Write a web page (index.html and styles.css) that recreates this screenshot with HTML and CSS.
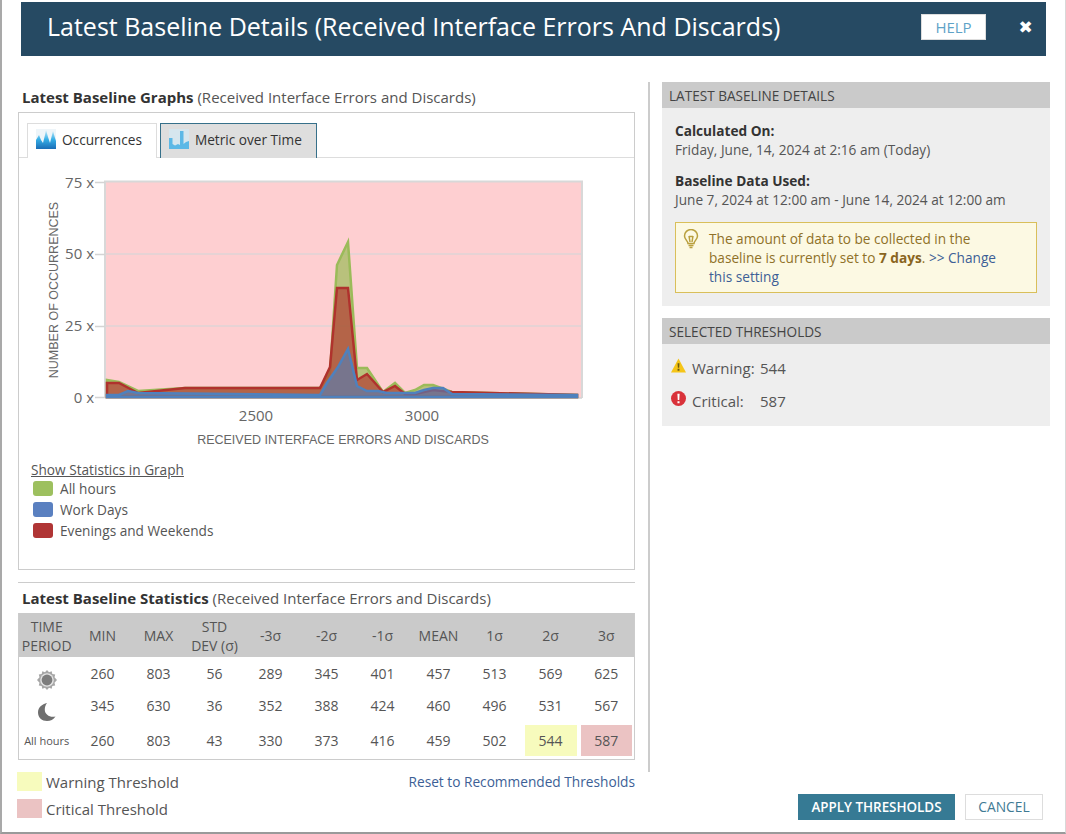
FILE: index.html
```html
<!DOCTYPE html>
<html lang="en">
<head>
<meta charset="utf-8">
<title>Latest Baseline Details</title>
<link rel="stylesheet" href="styles.css">
</head>
<body>
<div class="dialog">
  <header class="titlebar">
    <h1 class="title">Latest Baseline Details (Received Interface Errors And Discards)</h1>
    <button class="help">HELP</button>
    <span class="close">&#10006;</span>
  </header>
  <div class="content">
    <div class="left">
      <h2 class="section-title"><b>Latest Baseline Graphs</b> (Received Interface Errors and Discards)</h2>
      <div class="graph-box">
        <div class="tabs">
          <div class="tab">
            <svg class="tab-icon" viewBox="0 0 20 20"><defs><linearGradient id="g1" x1="0" y1="0" x2="0" y2="1"><stop offset="0" stop-color="#c8ecfa"/><stop offset=".5" stop-color="#35aee6"/><stop offset="1" stop-color="#1a6db6"/></linearGradient></defs><rect width="20" height="20" fill="#eef5f9"/><path d="M0 20V11L3 6 5 11 7 14 9 6 10 1 12 8 14 14 16 6 17 2 19 9 20 12V20Z" fill="url(#g1)"/></svg>
            Occurrences
          </div>
          <div class="tab tab-active">
            <svg class="tab-icon" viewBox="0 0 20 20"><rect width="20" height="20" fill="#d6e6ee"/><path d="M0 20V9H3.500V15L6 16.500 9 15 11 16V2H14.500V15L17 13 20 12V20Z" fill="#5cb8e6"/></svg>
            Metric over Time
          </div>
        </div>
        <svg class="chart" viewBox="19 158 615 290">
          <rect x="105" y="182" width="477" height="216" fill="#fecfd1"/>
          <path d="M105 254H582M105 326H582" stroke="#cfd6d8" stroke-width="1"/>
          <path d="M105 398V181.500H582V398" fill="none" stroke="#d8d8d8" stroke-width="2"/>
          <path d="M95 182.500H105M95 254.500H105M95 326.500H105M95 397.500H105M105 398H582" stroke="#d4d4d4" stroke-width="1.500"/>
          <path class="area-green" d="M107 397V380L119 382 138 391 185 388 320 388 330 373 337 265 348 242 357 368 367 368 383 392 395 383 405 393 415 390 424 385 433 385 452 392 577 395V397Z"/>
          <path class="area-red" d="M107 397V383L119 383 138 393 185 388 320 388 330 367 337 288 348 288 357 380 367 374 383 392 395 386 405 394 415 394 433 390 452 392 577 395V397Z"/>
          <path class="area-blue" d="M107 397V395L119 395 128 391 138 393 320 395 327 383 338 367 348 349 357 386 367 391 378 391 387 393 415 393 424 390 433 388 443 388 452 394 577 395V397Z"/>
          <text class="tick" x="94" y="188" text-anchor="end">75 x</text>
          <text class="tick" x="94" y="259" text-anchor="end">50 x</text>
          <text class="tick" x="94" y="331" text-anchor="end">25 x</text>
          <text class="tick" x="94" y="403" text-anchor="end">0 x</text>
          <text class="tick" x="256" y="421" text-anchor="middle">2500</text>
          <text class="tick" x="422" y="421" text-anchor="middle">3000</text>
          <text class="axis" x="343" y="444" text-anchor="middle">RECEIVED INTERFACE ERRORS AND DISCARDS</text>
          <text class="axis" transform="translate(58 290) rotate(-90)" text-anchor="middle">NUMBER OF OCCURRENCES</text>
        </svg>
        <div class="legend">
          <div class="legend-title">Show Statistics in Graph</div>
          <div class="legend-item"><span class="swatch sw-green"></span>All hours</div>
          <div class="legend-item"><span class="swatch sw-blue"></span>Work Days</div>
          <div class="legend-item"><span class="swatch sw-red"></span>Evenings and Weekends</div>
        </div>
      </div>
      <h2 class="section-title stats-title"><b>Latest Baseline Statistics</b> (Received Interface Errors and Discards)</h2>
      <table class="stats">
        <thead>
          <tr><th>TIME PERIOD</th><th>MIN</th><th>MAX</th><th>STD<br>DEV (σ)</th><th>-3σ</th><th>-2σ</th><th>-1σ</th><th>MEAN</th><th>1σ</th><th>2σ</th><th>3σ</th></tr>
        </thead>
        <tbody>
          <tr class="row-sun">
            <td class="icon-cell"><svg class="sun" viewBox="0 0 20 20"><path d="M10 0 12 2.300 14.700 1.200 15.300 4 18.200 4.500 17.500 7.300 20 10 17.500 12.700 18.200 15.500 15.300 16 14.700 18.800 12 17.700 10 20 8 17.700 5.300 18.800 4.700 16 1.800 15.500 2.500 12.700 0 10 2.500 7.300 1.800 4.500 4.700 4 5.300 1.200 8 2.300Z" fill="#a6a6a6"/><circle cx="10" cy="10" r="6.800" fill="#e4e4e4"/><circle cx="10" cy="10" r="5.400" fill="#7d7d7d"/></svg></td>
            <td>260</td><td>803</td><td>56</td><td>289</td><td>345</td><td>401</td><td>457</td><td>513</td><td>569</td><td>625</td>
          </tr>
          <tr class="row-moon">
            <td class="icon-cell"><svg class="moon" viewBox="0 0 18 18"><path d="M9 0C4 1 0 4.500 0 9.500 0 14.500 4 18 9 18 12.500 18 15.500 16.500 17.500 13.500 12 15 7 11.500 6.800 7 6.700 4.200 7.500 2 9 0Z" fill="#6f6f6f"/></svg></td>
            <td>345</td><td>630</td><td>36</td><td>352</td><td>388</td><td>424</td><td>460</td><td>496</td><td>531</td><td>567</td>
          </tr>
          <tr class="row-all">
            <td class="all-hours">All hours</td>
            <td>260</td><td>803</td><td>43</td><td>330</td><td>373</td><td>416</td><td>459</td><td>502</td><td><div class="mark mark-warn">544</div></td><td><div class="mark mark-crit">587</div></td>
          </tr>
        </tbody>
      </table>
      <div class="below-table">
        <div class="keys">
          <div class="key"><span class="key-swatch mark-warn"></span>Warning Threshold</div>
          <div class="key"><span class="key-swatch mark-crit"></span>Critical Threshold</div>
        </div>
        <a class="reset">Reset to Recommended Thresholds</a>
      </div>
    </div>
    <div class="right">
      <div class="right-pane">
        <section class="panel">
          <h3 class="panel-head">LATEST BASELINE DETAILS</h3>
          <div class="panel-body details">
            <p class="fact"><b>Calculated On:</b><br>Friday, June, 14, 2024 at 2:16 am (Today)</p>
            <p class="fact"><b>Baseline Data Used:</b><br>June 7, 2024 at 12:00 am - June 14, 2024 at 12:00 am</p>
            <div class="notice">
              <svg class="bulb" viewBox="0 0 16 20"><path d="M5 14.500C5 12 1.500 10.500 1.500 7A6.500 6.500 0 0 1 14.500 7C14.500 10.500 11 12 11 14.500ZM5.500 16.500H10.500M6.500 18.500H9.500M6 7 7 13M10 7 9 13M6 7.500H10" fill="none" stroke="#b9a03f" stroke-width="1.500"/></svg>
              <div>The amount of data to be collected in the baseline is currently set to <b>7 days</b>. <a class="change">&gt;&gt; Change this setting</a></div>
            </div>
          </div>
        </section>
        <section class="panel">
          <h3 class="panel-head">SELECTED THRESHOLDS</h3>
          <div class="panel-body thresholds">
            <div class="threshold">
              <svg class="status" viewBox="0 0 16 15"><path d="M8 0 16 15H0Z" fill="#f5c518"/><path d="M7 5H9L8.700 10H7.300ZM7 11H9V13H7Z" fill="#6b5a10"/></svg>
              <span class="th-label">Warning:</span><span>544</span>
            </div>
            <div class="threshold">
              <svg class="status" viewBox="0 0 16 16"><circle cx="8" cy="8" r="8" fill="#d9323a"/><path d="M6.800 3H9.200L8.800 9.500H7.200ZM6.900 10.800H9.100V13H6.900Z" fill="#fff"/></svg>
              <span class="th-label">Critical:</span><span>587</span>
            </div>
          </div>
        </section>
      </div>
      <div class="actions">
        <button class="apply">APPLY THRESHOLDS</button>
        <button class="cancel">CANCEL</button>
      </div>
    </div>
  </div>
</div>
</body>
</html>
```

FILE: styles.css
```css
* { box-sizing: border-box; }
html, body { margin: 0; padding: 0; background: #fff; }
body { font-family: "Open Sans", sans-serif; font-size: 13.65px; color: #444; overflow: hidden; }
.dialog { width: 1066px; height: 834px; border-left: 2px solid #a9a9a9; border-bottom: 2px solid #9a9a9a; border-right: 1px solid #d8d8d8; padding-top: 2px; }
.titlebar { display: flex; align-items: center; height: 54px; margin-left: 19px; width: 1025px; background: #264a63; padding: 0 0 5px 26px; }
.title { flex: 1; margin: 0; padding-bottom: 2px; font-size: 25px; font-weight: 400; color: #fff; white-space: nowrap; }
.help { width: 65px; height: 26px; padding: 0; border: 1px solid #ddd; background: #fff; color: #5fa3c7; font: 15px "Open Sans", sans-serif; margin-right: 26px; }
.close { width: 27px; margin-right: 7px; color: #fff; font: 17px "DejaVu Sans", sans-serif; text-align: center; }
.content { display: flex; padding-top: 26px; }
.left { width: 617px; margin-left: 16px; flex: none; }
.section-title { margin: 0; height: 30px; padding: 6px 0 0 4px; font-size: 15px; font-weight: 400; line-height: 19px; color: #555; white-space: nowrap; }
.section-title b { color: #333; font-weight: 700; }
.graph-box { height: 458px; border: 1px solid #ccc; }
.tabs { display: flex; gap: 3px; height: 45px; padding: 10px 0 0 8px; border-bottom: 1px solid #ddd; }
.tab { display: flex; align-items: center; gap: 6px; height: 35px; padding: 0 14px 4px 8px; border: 1px solid #ddd; border-bottom: 0; background: #fff; color: #333; }
.tab-active { background: #dedede; border-color: #36708a; }
.tab-icon { width: 20px; height: 20px; }
.chart { display: block; width: 615px; height: 290px; }
.area-green { fill: rgba(155, 187, 89, .7); stroke: #9bbb59; stroke-width: 2.500; }
.area-red { fill: rgba(176, 50, 45, .65); stroke: #b0322d; stroke-width: 2.500; }
.area-blue { fill: rgba(79, 129, 189, .6); stroke: #4f81bd; stroke-width: 2.500; }
.tick { font: 15px "Open Sans", sans-serif; fill: #666; }
.axis { font: 12.500px "Liberation Sans", sans-serif; fill: #666; }
.legend { padding: 13px 0 0 12px; }
.legend-title { line-height: 17px; text-decoration: underline; color: #555; }
.legend-item { display: flex; align-items: center; gap: 7px; height: 21px; margin-left: 2px; color: #555; }
.swatch { width: 20px; height: 15px; border-radius: 3px; }
.sw-green { background: #9dc05f; }
.sw-blue { background: #5a80c0; }
.sw-red { background: #b03535; }
.stats-title { height: 31px; margin-top: 12px; border-top: 1px solid #ccc; padding-top: 6px; }
.stats { width: 617px; table-layout: fixed; border-collapse: collapse; border: 1px solid #ccc; border-top: 0; text-align: center; color: #555; font-size: 14px; }
.stats th { height: 44px; padding: 1px 0 0; background: #cacaca; font-weight: 400; line-height: 19px; color: #555; }
.stats td { padding: 0; vertical-align: top; line-height: 19px; }
.row-sun td { height: 33px; padding-top: 7px; }
.row-moon td { height: 34px; padding-top: 6px; }
.row-all td { height: 35px; padding-top: 7px; }
.stats td.icon-cell { padding-top: 13px; }
.row-moon td.icon-cell { padding-top: 13px; }
.sun { display: block; width: 20px; height: 20px; margin: 0 auto; }
.moon { display: block; width: 18px; height: 18px; margin: 0 auto; }
.stats td.all-hours { font-size: 11px; padding-top: 7px; }
.stats td:has(.mark) { padding: 1px 2px 0 2px; }
.mark { height: 31px; line-height: 31px; }
.mark-warn { background: #f7fbbd; }
.mark-crit { background: #ebc3c3; }
.below-table { display: flex; justify-content: space-between; padding-top: 9px; }
.key { display: flex; align-items: center; gap: 4px; height: 27px; font-size: 15px; color: #555; }
.key-swatch { width: 25px; height: 19px; margin: -2px 0 0 -1px; }
.reset { padding-top: 3px; color: #3d5f96; line-height: 19px; font-size: 13.700px; }
.right { flex: none; width: 401px; margin-left: 13px; }
.right-pane { height: 690px; border-left: 2px solid #ccc; padding-left: 12px; }
.panel { width: 388px; margin-bottom: 12px; background: #eee; }
.panel-head { margin: 0; height: 26px; padding-left: 7px; background: #cacaca; font-size: 13.600px; font-weight: 400; line-height: 28px; color: #444; }
.panel-body { padding-left: 13px; }
.details { height: 198px; padding-top: 13px; }
.fact { margin: 0 0 12px; line-height: 19px; color: #555; }
.fact b { color: #333; }
.notice { display: flex; gap: 10px; width: 362px; height: 71px; margin-top: 13px; padding: 6px 27px 0 7px; border: 1px solid #d9bf5a; background: #fcf9e3; line-height: 19px; color: #8f7128; }
.notice b { color: #8a6520; }
.bulb { flex: none; width: 16px; height: 20px; }
.change { color: #3d5f96; }
.thresholds { height: 82px; padding: 14px 0 0 9px; font-size: 15px; }
.threshold { display: flex; height: 33px; line-height: 21px; color: #555; }
.status { flex: none; width: 15px; height: 15px; margin-right: 6px; }
.th-label { width: 68px; }
.actions { display: flex; justify-content: flex-end; gap: 10px; padding: 22px 6px 0 0; }
.apply { width: 157px; height: 26px; padding: 0; border: 0; background: #367a94; color: #fff; font: 600 13.400px "Open Sans", sans-serif; }
.cancel { width: 78px; height: 26px; padding: 0 0 2px; border: 1px solid #ddd; background: #fff; color: #3f7a94; font: 13.800px "Open Sans", sans-serif; }
```
